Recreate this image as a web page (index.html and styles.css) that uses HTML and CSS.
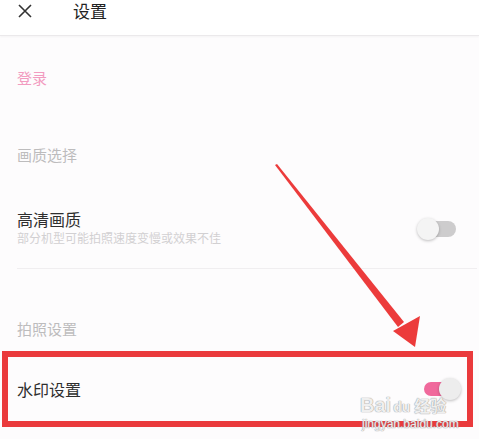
FILE: index.html
```html
<!DOCTYPE html>
<html lang="zh-CN">
<head>
  <meta charset="UTF-8" />
  <meta name="viewport" content="width=device-width, initial-scale=1.0"/>
  <title>设置</title>
  <link rel="stylesheet" href="styles.css">
</head>
<body>
  <div class="page">
    <div class="header">
      <svg class="close-icon" width="16" height="14" viewBox="0 0 16 14">
        <path d="M2 1 L14 13 M14 1 L2 13" stroke="#333" stroke-width="1.6" fill="none"/>
      </svg>
      <span class="header-title">设置</span>
    </div>

    <div class="login-row">登录</div>

    <div class="section-title first">画质选择</div>

    <div class="item with-divider">
      <div class="item-text">
        <div class="item-title">高清画质</div>
        <div class="item-sub">部分机型可能拍照速度变慢或效果不佳</div>
      </div>
      <div class="toggle off"><span class="knob"></span></div>
    </div>

    <div class="section-title second">拍照设置</div>

    <div class="item watermark-row">
      <div class="item-text">
        <div class="item-title">水印设置</div>
      </div>
      <div class="toggle on"><span class="knob"></span></div>
      <div class="highlight-box"></div>
    </div>

    <!-- annotation arrow drawn over the page -->
    <svg class="arrow" width="479" height="439" viewBox="0 0 479 439">
      <polygon points="275,165 277,164 404,322 398,327" fill="#ec3b3b"/>
      <polygon points="393,331 420,316 415,347" fill="#ec3b3b"/>
    </svg>

    <div class="watermark">
      <div class="wm-top"><span>Bai</span><span class="wm-paw">du</span><span class="wm-cn">经验</span></div>
      <div class="wm-url">jingyan.baidu.com</div>
    </div>
  </div>
</body>
</html>
```

FILE: styles.css
```css
body {
  margin: 0;
  background: #fdfcfd;
  font-family: "Noto Sans CJK SC", "Noto Sans", sans-serif;
  color: #333;
}
.page {
  position: relative;
  width: 479px;
  height: 439px;
  overflow: hidden;
}
.header {
  height: 35px;
  display: flex;
  align-items: flex-start;
  background: #fff;
  border-bottom: 1px solid #ebe9eb;
  box-shadow: 0 1px 2px rgba(0,0,0,0.04);
}
.close-icon {
  margin: 4px 0 0 17px;
}
.header-title {
  margin-left: 40px;
  font-size: 17px;
  line-height: 21px;
  color: #222;
}
.login-row {
  height: 84px;
  line-height: 84px;
  padding-left: 17px;
  font-size: 15px;
  color: #f29bc0;
}
.section-title {
  padding-left: 17px;
  font-size: 15px;
  line-height: 22px;
  color: #bdbcbd;
}
.section-title.first {
  padding-top: 24px;
  padding-bottom: 24px;
}
.section-title.second {
  padding-top: 50px;
  padding-bottom: 17px;
}
.item {
  position: relative;
  display: flex;
  align-items: center;
  padding-left: 17px;
  padding-right: 23px;
}
.item.with-divider {
  padding-top: 18px;
  padding-bottom: 22px;
}
.item.with-divider::after {
  content: "";
  position: absolute;
  left: 17px;
  right: 2px;
  bottom: -1px;
  border-bottom: 1px solid #f0eef0;
}
.item-text {
  flex: 1;
}
.item-title {
  font-size: 16px;
  line-height: 22px;
  color: #2e2e2e;
}
.item-sub {
  font-size: 12px;
  line-height: 16px;
  color: #d2d0d2;
}
.toggle {
  position: relative;
  width: 36px;
  height: 16px;
  border-radius: 8px;
  margin-top: 3px;
}
.toggle.off {
  background: #cdcccd;
}
.toggle.on {
  width: 34px;
  height: 14px;
  border-radius: 7px;
  margin-top: 0;
  background: #f0699c;
}
.knob {
  position: absolute;
  top: -3px;
  width: 22px;
  height: 22px;
  border-radius: 50%;
  background: #f4f4f4;
  box-shadow: 0 1px 3px rgba(0,0,0,0.25);
}
.toggle.off .knob {
  left: -3px;
}
.toggle.on .knob {
  right: -3px;
  top: -4px;
  background: #ededed;
}
.watermark-row {
  height: 64px;
  padding-right: 21px;
}
.highlight-box {
  position: absolute;
  left: 2px;
  top: -6px;
  width: 459px;
  height: 64px;
  border: 6px solid #ea3a3c;
}
.arrow {
  position: absolute;
  left: 0;
  top: 0;
}
.watermark {
  position: absolute;
  left: 360px;
  top: 394px;
  color: rgba(255,255,255,0.85);
  text-shadow: 0 0 1px #999, 0 0 1px #999;
  font-family: "Liberation Sans", sans-serif;
}
.wm-top {
  font-size: 20px;
  line-height: 22px;
  font-weight: bold;
}
.wm-paw {
  margin-left: 2px;
  font-size: 14px;
}
.wm-cn {
  margin-left: 4px;
  font-size: 16px;
  font-family: "Noto Sans CJK SC", sans-serif;
}
.wm-url {
  font-size: 12px;
  line-height: 12px;
  margin-left: 2px;
}
```
